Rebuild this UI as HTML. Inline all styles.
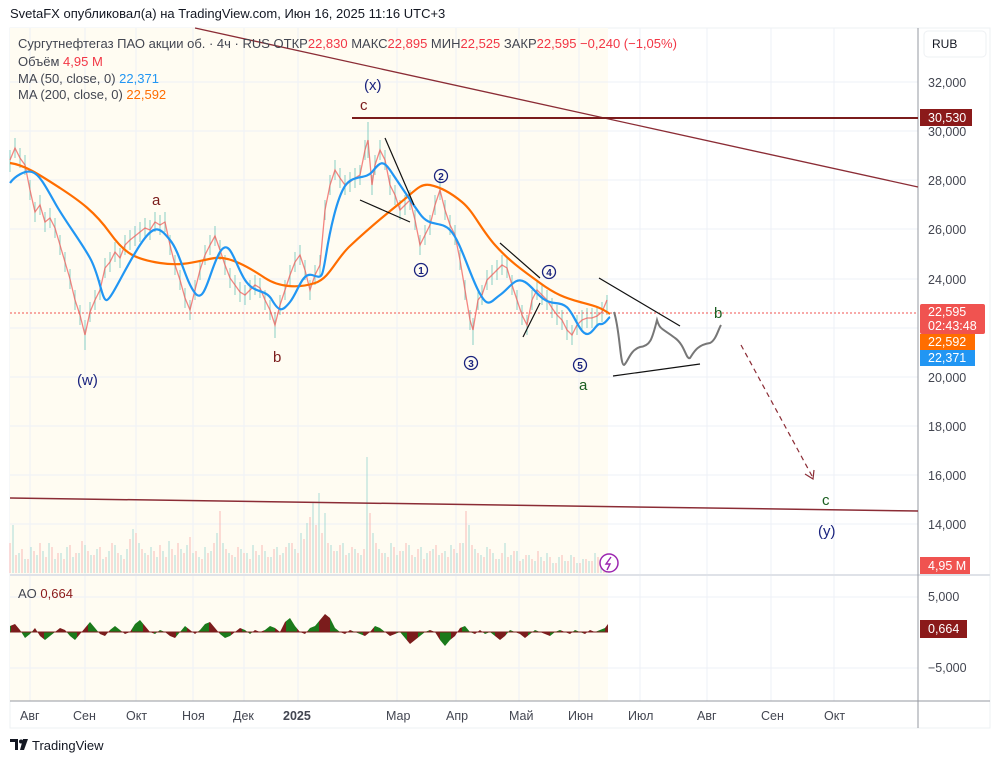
<!DOCTYPE html>
<html><head><meta charset="utf-8"><style>
html,body{margin:0;padding:0;background:#fff;width:1000px;height:763px;overflow:hidden;font-family:"Liberation Sans","DejaVu Sans",sans-serif;}
svg text{font-family:"Liberation Sans","DejaVu Sans",sans-serif;}
</style></head><body>
<svg width="1000" height="763" xmlns="http://www.w3.org/2000/svg">
<defs>
<pattern id="aop" x="0" y="0" width="22" height="10" patternUnits="userSpaceOnUse">
<rect x="0" y="0" width="11" height="10" fill="#1b7a1b"/><rect x="11" y="0" width="11" height="10" fill="#7b1c1c"/>
</pattern>
</defs>
<rect x="0" y="0" width="1000" height="763" fill="#fff"/>
<rect x="10" y="28" width="980" height="700" fill="#fff" stroke="#eef0f3"/>
<rect x="10" y="28" width="598" height="673" fill="#fffcf2"/>
<g stroke="#eef1f7" stroke-width="1">
<line x1="10" x2="918" y1="82" y2="82"/><line x1="10" x2="918" y1="131" y2="131"/><line x1="10" x2="918" y1="180" y2="180"/><line x1="10" x2="918" y1="229" y2="229"/><line x1="10" x2="918" y1="279" y2="279"/><line x1="10" x2="918" y1="328" y2="328"/><line x1="10" x2="918" y1="377" y2="377"/><line x1="10" x2="918" y1="426" y2="426"/><line x1="10" x2="918" y1="475" y2="475"/><line x1="10" x2="918" y1="524" y2="524"/><line x1="10" x2="918" y1="597" y2="597"/><line x1="10" x2="918" y1="668" y2="668"/>
<line x1="30" x2="30" y1="28" y2="701"/><line x1="85" x2="85" y1="28" y2="701"/><line x1="136" x2="136" y1="28" y2="701"/><line x1="193" x2="193" y1="28" y2="701"/><line x1="244" x2="244" y1="28" y2="701"/><line x1="298" x2="298" y1="28" y2="701"/><line x1="397" x2="397" y1="28" y2="701"/><line x1="456" x2="456" y1="28" y2="701"/><line x1="519" x2="519" y1="28" y2="701"/><line x1="579" x2="579" y1="28" y2="701"/><line x1="640" x2="640" y1="28" y2="701"/><line x1="707" x2="707" y1="28" y2="701"/><line x1="771" x2="771" y1="28" y2="701"/><line x1="834" x2="834" y1="28" y2="701"/>
</g>
<line x1="10" y1="575" x2="990" y2="575" stroke="#dfe2e8" stroke-width="2"/>
<line x1="10" y1="701" x2="990" y2="701" stroke="#9598a1" stroke-width="1"/>
<line x1="918" y1="28" x2="918" y2="728" stroke="#9598a1" stroke-width="1"/>
<!-- volume -->
<path stroke="#f6a5a3" stroke-width="1" opacity="0.75" d="M10 573v-30M16 573v-18M22 573v-24M28 573v-14M34 573v-22M40 573v-30M46 573v-16M52 573v-26M58 573v-20M64 573v-14M70 573v-28M76 573v-20M82 573v-32M88 573v-22M94 573v-18M100 573v-26M106 573v-16M112 573v-30M118 573v-20M124 573v-14M130 573v-34M136 573v-40M142 573v-24M148 573v-18M154 573v-22M160 573v-28M166 573v-16M172 573v-24M178 573v-30M184 573v-20M190 573v-36M196 573v-22M202 573v-14M208 573v-20M214 573v-30M220 573v-62M226 573v-24M232 573v-18M238 573v-26M244 573v-20M250 573v-14M256 573v-22M262 573v-28M268 573v-16M274 573v-24M280 573v-18M286 573v-26M292 573v-30M298 573v-20M304 573v-34M310 573v-56M316 573v-48M322 573v-40M328 573v-30M334 573v-22M340 573v-28M346 573v-18M352 573v-26M358 573v-20M364 573v-24M370 573v-60M376 573v-30M382 573v-20M388 573v-16M394 573v-26M400 573v-22M406 573v-30M412 573v-18M418 573v-24M424 573v-14M430 573v-22M436 573v-28M442 573v-20M448 573v-16M454 573v-24M460 573v-30M466 573v-62M472 573v-28M478 573v-20M484 573v-16M490 573v-24M496 573v-14M502 573v-20M508 573v-16M514 573v-22M520 573v-12M526 573v-18M532 573v-14M538 573v-22M544 573v-12M550 573v-16M556 573v-10M562 573v-18M568 573v-12M574 573v-16M580 573v-10M586 573v-14M592 573v-12M598 573v-16M604 573v-12"/>
<path stroke="#8fd3cc" stroke-width="1" opacity="0.75" d="M13 573v-48M19 573v-20M25 573v-14M31 573v-26M37 573v-18M43 573v-22M49 573v-30M55 573v-14M61 573v-20M67 573v-26M73 573v-16M79 573v-20M85 573v-28M91 573v-18M97 573v-24M103 573v-14M109 573v-22M115 573v-28M121 573v-18M127 573v-24M133 573v-44M139 573v-30M145 573v-20M151 573v-26M157 573v-16M163 573v-22M169 573v-32M175 573v-18M181 573v-24M187 573v-28M193 573v-20M199 573v-16M205 573v-26M211 573v-22M217 573v-40M223 573v-30M229 573v-20M235 573v-16M241 573v-24M247 573v-20M253 573v-28M259 573v-18M265 573v-22M271 573v-16M277 573v-26M283 573v-20M289 573v-30M295 573v-24M301 573v-40M307 573v-50M313 573v-70M319 573v-80M325 573v-60M331 573v-28M337 573v-22M343 573v-30M349 573v-20M355 573v-24M361 573v-18M367 573v-116M373 573v-40M379 573v-24M385 573v-20M391 573v-30M397 573v-18M403 573v-22M409 573v-28M415 573v-16M421 573v-26M427 573v-20M433 573v-24M439 573v-18M445 573v-22M451 573v-28M457 573v-20M463 573v-30M469 573v-48M475 573v-24M481 573v-18M487 573v-26M493 573v-20M499 573v-14M505 573v-30M511 573v-18M517 573v-22M523 573v-14M529 573v-18M535 573v-12M541 573v-16M547 573v-20M553 573v-10M559 573v-16M565 573v-12M571 573v-18M577 573v-10M583 573v-14M589 573v-12M595 573v-20M601 573v-14M606 573v-16"/>
<!-- AO -->
<polygon fill="url(#aop)" points="10,632 10,626 15,624 20,630 25,638 30,634 35,628 40,636 45,640 50,636 55,632 60,628 65,630 70,636 75,640 80,634 85,628 90,622 95,628 100,634 105,636 110,630 115,626 120,630 125,634 130,632 135,624 140,620 145,626 150,632 155,634 160,630 165,632 170,636 175,638 180,632 185,626 190,630 195,634 200,630 205,624 210,622 215,628 220,634 225,638 230,636 235,632 240,628 245,630 250,634 255,630 260,632 265,630 270,626 275,628 280,632 285,622 290,618 295,626 300,632 305,634 310,628 315,626 320,620 325,614 330,618 335,628 340,632 345,634 350,630 355,632 360,634 365,636 370,632 375,626 380,628 385,632 390,636 395,634 400,632 405,638 410,644 415,640 420,636 425,632 430,630 435,632 440,640 445,646 450,640 455,636 460,628 465,626 470,632 475,634 480,630 485,634 490,632 495,636 500,640 505,636 510,630 515,632 520,634 525,638 530,634 535,630 540,632 545,634 550,636 555,632 560,630 565,632 570,634 575,630 580,632 585,634 590,630 595,632 600,630 605,628 608,624 608,632"/>
<line x1="10" y1="632" x2="608" y2="632" stroke="#7b1c1c" stroke-width="1"/>
<!-- candles -->
<path fill="none" stroke="#6cc3b8" stroke-width="0.8" d="M10 150V172M15 138V158M20 148V168M25 155V175M30 180V200M35 202V222M40 195V215M45 212V232M50 208V228M55 218V238M60 235V255M65 252V272M70 269V289M75 290V310M80 305V325M85 320V350M90 302V322M95 290V310M100 280V300M105 258V278M110 252V272M115 242V262M120 248V268M125 235V255M130 230V250M135 226V246M140 222V242M145 218V238M150 220V240M155 212V232M160 215V235M165 212V232M170 235V255M175 255V275M180 270V290M185 288V308M190 300V320M195 280V300M200 260V280M205 245V265M210 235V255M215 226V246M220 240V260M225 255V275M230 268V288M235 275V295M240 282V302M245 285V305M250 280V300M255 275V295M260 278V298M265 290V310M270 300V320M275 312V338M280 295V315M285 280V300M290 265V285M295 252V272M300 245V265M305 260V280M310 280V300M315 265V285M320 255V275M325 200V220M330 175V195M335 160V180M340 168V188M345 175V195M350 172V192M355 168V188M360 165V185M365 140V160M368 122V158M372 175V195M375 155V175M380 140V160M385 150V170M390 175V195M395 185V205M400 200V220M405 195V215M410 190V210M415 210V230M420 235V255M425 225V245M430 215V235M435 195V215M440 180V200M445 200V220M450 215V235M455 225V245M460 250V270M465 280V300M470 310V330M473 318V345M478 290V310M482 285V305M487 270V290M492 265V285M497 260V280M502 255V275M507 258V278M512 275V295M517 290V310M522 305V325M527 315V335M532 290V310M537 280V300M542 285V305M547 290V310M552 298V318M557 305V325M562 310V330M567 320V340M572 325V345M577 315V335M582 310V330M587 308V328M592 308V328M597 306V326M602 302V322M607 295V315"/>
<polyline fill="none" stroke="#ef5350" stroke-width="1.3" opacity="0.7" points="10,160 15,148 20,158 25,165 30,190 35,212 40,205 45,222 50,218 55,228 60,245 65,262 70,279 75,300 80,315 85,335 90,312 95,300 100,290 105,268 110,262 115,252 120,258 125,245 130,240 135,236 140,232 145,228 150,230 155,222 160,225 165,222 170,245 175,265 180,280 185,298 190,310 195,290 200,270 205,255 210,245 215,236 220,250 225,265 230,278 235,285 240,292 245,295 250,290 255,285 260,288 265,300 270,310 275,325 280,305 285,290 290,275 295,262 300,255 305,270 310,290 315,275 320,265 325,210 330,185 335,170 340,178 345,185 350,182 355,178 360,175 365,150 368,140 372,185 375,165 380,150 385,160 390,185 395,195 400,210 405,205 410,200 415,220 420,245 425,235 430,225 435,205 440,190 445,210 450,225 455,235 460,260 465,290 470,320 473,330 478,300 482,295 487,280 492,275 497,270 502,265 507,268 512,285 517,300 522,315 527,325 532,300 537,290 542,295 547,300 552,308 557,315 562,320 567,330 572,335 577,325 582,320 587,318 592,318 597,316 602,312 607,300"/>
<line x1="10" y1="313" x2="918" y2="313" stroke="#f05350" stroke-width="1" stroke-dasharray="2,2"/>
<path fill="none" stroke="#ff6d00" stroke-width="2.2" d="M10,163 C25,165 40,175 60,188 S95,212 110,233 S135,259 160,263 S200,260 215,258 S250,268 265,278 S300,288 315,283 S335,260 350,246 S385,215 400,203 S420,183 430,185 S450,192 462,202 S480,228 495,245 S525,272 540,283 S565,298 580,302 S600,307 610,314"/>
<path fill="none" stroke="#2196f3" stroke-width="2.2" d="M10,183 C15,176 25,170 32,172 S45,185 55,203 S80,240 90,258 S102,302 107,300 S125,268 140,245 S160,228 170,240 S185,280 195,293 S210,268 220,252 S235,265 245,280 S265,288 272,300 S282,312 290,302 S302,272 312,275 S322,280 326,255 S337,198 345,186 S365,180 372,172 S382,158 390,170 S410,200 420,214 S440,220 450,230 S468,270 478,290 S490,302 500,295 S515,276 525,282 S540,302 555,303 S570,312 580,328 S595,323 600,324 S608,318 610,317"/>
<line x1="195" y1="28" x2="918" y2="187" stroke="#8b2c35" stroke-width="1.3"/>
<line x1="10" y1="498" x2="918" y2="511" stroke="#8b2c35" stroke-width="1.5"/>
<line x1="352" y1="118" x2="918" y2="118" stroke="#7b1c1c" stroke-width="2"/>
<g stroke="#111" stroke-width="1.2">
<line x1="385" y1="138" x2="414" y2="205"/><line x1="360" y1="200" x2="410" y2="222"/>
<line x1="500" y1="243" x2="540" y2="278"/><line x1="523" y1="337" x2="540" y2="303"/>
<line x1="599" y1="278" x2="680" y2="326"/><line x1="613" y1="376" x2="700" y2="364"/>
</g>
<path d="M614,312 C620,330 620,365 624,365 C628,362 630,350 640,347 C650,346 652,340 657,320 C660,330 662,328 675,338 C685,345 686,360 690,358 C694,352 697,345 710,343 C716,340 718,330 721,325" fill="none" stroke="#777" stroke-width="2"/>
<line x1="741" y1="345" x2="812" y2="476" stroke="#8b2c35" stroke-width="1.2" stroke-dasharray="5,4"/>
<path d="M805,474 L813,479 L814,470" fill="none" stroke="#8b2c35" stroke-width="1.2"/>
<g font-size="15">
<text x="364" y="90" fill="#1a237e">(x)</text>
<text x="360" y="110" fill="#7b1c1c">c</text>
<text x="152" y="205" fill="#7b1c1c">a</text>
<text x="273" y="362" fill="#7b1c1c">b</text>
<text x="77" y="385" fill="#1a237e">(w)</text>
<text x="579" y="390" fill="#1b5e20">a</text>
<text x="714" y="318" fill="#1b5e20">b</text>
<text x="822" y="505" fill="#1b5e20">c</text>
<text x="818" y="536" fill="#1a237e">(y)</text>
</g>
<g fill="none" stroke="#1a237e" stroke-width="1.3">
<circle cx="421" cy="270" r="6.5"/><circle cx="441" cy="176" r="6.5"/><circle cx="471" cy="363" r="6.5"/><circle cx="549" cy="272" r="6.5"/><circle cx="580" cy="365" r="6.5"/>
</g>
<g font-size="10" fill="#1a237e" text-anchor="middle" font-weight="bold">
<text x="421" y="274">1</text><text x="441" y="180">2</text><text x="471" y="367">3</text><text x="549" y="276">4</text><text x="580" y="369">5</text>
</g>
<circle cx="609" cy="563" r="9" fill="#fff" stroke="#9c27b0" stroke-width="1.5"/>
<path d="M611,557 L606,564 L610,564 L607,570" fill="none" stroke="#9c27b0" stroke-width="1.4"/>
<text x="10" y="18" font-size="13" fill="#131722">SvetaFX опубликовал(а) на TradingView.com, Июн 16, 2025 11:16 UTC+3</text>
<g font-size="13" fill="#434651">
<text x="18" y="48">Сургутнефтегаз ПАО акции об. · 4ч · RUS  ОТКР<tspan fill="#f23645">22,830</tspan>  МАКС<tspan fill="#f23645">22,895</tspan>  МИН<tspan fill="#f23645">22,525</tspan>  ЗАКР<tspan fill="#f23645">22,595</tspan>  <tspan fill="#f23645">−0,240 (−1,05%)</tspan></text>
<text x="18" y="66">Объём  <tspan fill="#f23645">4,95 M</tspan></text>
<text x="18" y="83">MA (50, close, 0)  <tspan fill="#2196f3">22,371</tspan></text>
<text x="18" y="99">MA (200, close, 0)  <tspan fill="#ff6d00">22,592</tspan></text>
<text x="18" y="598">AO  <tspan fill="#8b1a1a">0,664</tspan></text>
</g>
<rect x="924" y="31" width="62" height="26" rx="4" fill="#fff" stroke="#eef0f3"/>
<text x="932" y="48" font-size="12" fill="#131722">RUB</text>
<g font-size="12.5" fill="#434651">
<text x="928" y="87">32,000</text><text x="928" y="136">30,000</text><text x="928" y="185">28,000</text><text x="928" y="234">26,000</text><text x="928" y="284">24,000</text><text x="928" y="382">20,000</text><text x="928" y="431">18,000</text><text x="928" y="480">16,000</text><text x="928" y="529">14,000</text>
<text x="928" y="601">5,000</text><text x="928" y="672">−5,000</text>
</g>
<rect x="920" y="109" width="52" height="17" fill="#8b1a1a"/><text x="928" y="122" font-size="12.5" fill="#fff">30,530</text>
<rect x="920" y="304" width="65" height="30" rx="2" fill="#f05350"/><text x="928" y="316" font-size="12.5" fill="#fff">22,595</text><text x="928" y="330" font-size="12.5" fill="#fff">02:43:48</text>
<rect x="920" y="334" width="55" height="16" fill="#ff6d00"/><text x="928" y="346" font-size="12.5" fill="#fff">22,592</text>
<rect x="920" y="350" width="55" height="16" fill="#2196f3"/><text x="928" y="362" font-size="12.5" fill="#fff">22,371</text>
<rect x="920" y="557" width="50" height="17" fill="#f05350"/><text x="928" y="570" font-size="12.5" fill="#fff">4,95 M</text>
<rect x="920" y="620" width="47" height="18" fill="#8b1a1a"/><text x="928" y="633" font-size="12.5" fill="#fff">0,664</text>
<g font-size="12.5" fill="#434651">
<text x="20" y="720">Авг</text><text x="73" y="720">Сен</text><text x="126" y="720">Окт</text><text x="182" y="720">Ноя</text><text x="233" y="720">Дек</text><text x="283" y="720" font-weight="bold">2025</text><text x="386" y="720">Мар</text><text x="446" y="720">Апр</text><text x="509" y="720">Май</text><text x="568" y="720">Июн</text><text x="628" y="720">Июл</text><text x="697" y="720">Авг</text><text x="761" y="720">Сен</text><text x="824" y="720">Окт</text>
</g>
<g fill="#131722"><path d="M10,739 h8 v11 h-3 v-8 h-5z"/><circle cx="21" cy="741.5" r="2"/><path d="M23,739 h5 l-4,11 h-4z"/></g>
<text x="32" y="750" font-size="13" fill="#131722">TradingView</text>
</svg>
</body></html>
